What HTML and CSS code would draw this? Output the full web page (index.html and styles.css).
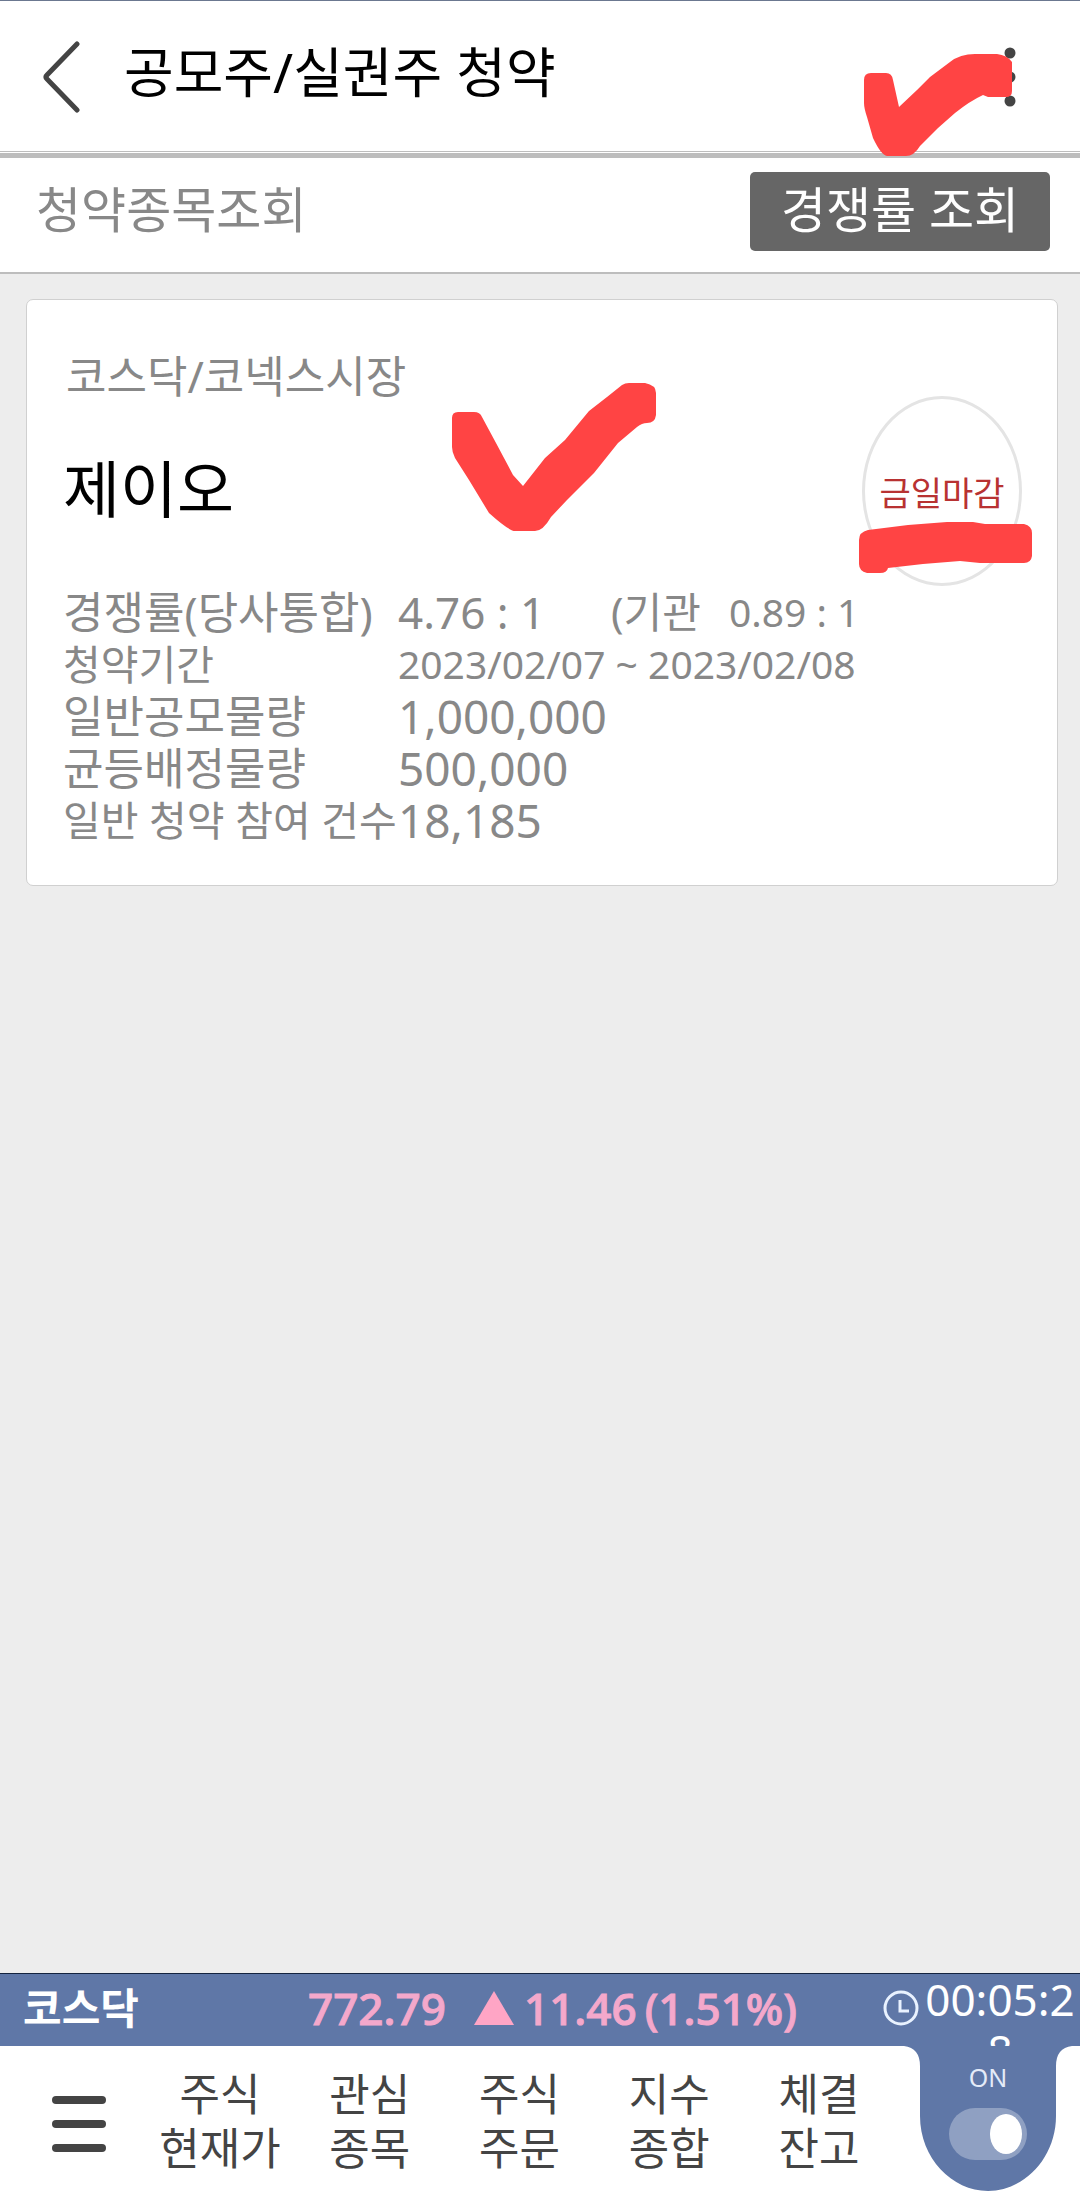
FILE: index.html
```html
<!DOCTYPE html>
<html lang="ko">
<head>
<meta charset="utf-8">
<meta name="viewport" content="width=device-width, initial-scale=1">
<title>공모주/실권주 청약</title>
<link rel="stylesheet" href="styles.css">
</head>
<body>
<div class="app">
  <header class="app-header">
    <button class="icon-button back" type="button" aria-label="뒤로">
      <svg width="40" height="74" viewBox="0 0 40 74"><path d="M37 4 7 35q-2 2 0 4L37 70" fill="none" stroke="#444" stroke-width="5" stroke-linecap="round" stroke-linejoin="round"/></svg>
    </button>
    <h1 class="title">공모주/실권주 청약</h1>
    <button class="icon-button more" type="button" aria-label="더보기">
      <svg width="12" height="60" viewBox="0 0 12 60" fill="#444"><circle cx="6" cy="6" r="5.5"/><circle cx="6" cy="30" r="5.5"/><circle cx="6" cy="54" r="5.5"/></svg>
    </button>
    <svg class="mark mark-header" width="152" height="104" viewBox="862 53 152 104"><path d="M864 80Q864 73 871 73H886Q892 73 893 80L899 107L917 90L930 77L950 62Q960 54 975 54H997Q1007 55 1012 62V91Q1012 97 1006 97H988L983 95Q970 101 955 113L938 128L920 146Q914 156 906 156H887Q881 155 873 138L867 117Q864 108 864 103Z"/></svg>
  </header>

  <section class="subbar">
    <h2 class="subbar-title">청약종목조회</h2>
    <button class="rate-button" type="button">경쟁률 조회</button>
  </section>

  <main class="content">
    <article class="card">
      <div class="card-top">
        <div class="stock">
          <p class="market">코스닥/코넥스시장</p>
          <h3 class="name">제이오</h3>
        </div>
        <div class="badge">금일마감</div>
      </div>
      <dl class="details">
        <dt>경쟁률(당사통합)</dt>
        <dd><span class="rate">4.76 : 1</span><span class="inst">(기관</span><span class="small">0.89 : 1</span></dd>
        <dt class="compact">청약기간</dt>
        <dd class="small">2023/02/07 ~ 2023/02/08</dd>
        <dt>일반공모물량</dt>
        <dd class="large">1,000,000</dd>
        <dt>균등배정물량</dt>
        <dd class="large">500,000</dd>
        <dt class="compact">일반 청약 참여 건수</dt>
        <dd class="large">18,185</dd>
      </dl>
      <svg class="mark mark-check" width="206" height="150" viewBox="451 382 206 150"><path d="M452 418Q452 412 458 412H474Q480 412 482 417L496 443L513 475L523 486L545 458L565 440L589 411L607 397L622 385Q625 383 629 383H645Q656 385 656 393V415Q655 423 647 423Q642 423 637 427L618 443L594 473L567 500L551 517Q543 531 535 531H515Q509 531 489 513L469 480L455 458Q452 452 452 447Z"/></svg>
      <svg class="mark mark-line" width="174" height="52" viewBox="859 522 174 52"><path d="M859 540Q859 532 868 530L908 525L947 522H973L985 524H1024Q1032 526 1032 533V556Q1031 563 1024 563H980L960 561L923 564L888 568Q887 573 880 573H867Q859 571 859 564Z"/></svg>
    </article>
  </main>

  <footer class="footer">
    <div class="ticker">
      <strong class="index-name">코스닥</strong>
      <span class="index-value">772.79</span>
      <svg class="up" width="40" height="34" viewBox="0 0 40 34"><path d="M20 0 40 34H0Z" fill="#ffa5c5"/></svg>
      <span class="index-change"><span>11.46</span><span>(1.51%)</span></span>
      <svg class="clock" width="36" height="36" viewBox="0 0 36 36" fill="none" stroke="#e9f2ff"><circle cx="18" cy="18" r="16" stroke-width="3"/><path d="M17 10V21H26" stroke-width="3"/></svg>
      <span class="timer">00:05:28</span>
    </div>
    <nav class="nav">
      <button class="icon-button menu" type="button" aria-label="전체 메뉴">
        <svg width="54" height="56" viewBox="0 0 54 56" fill="#444"><rect width="54" height="8" rx="4"/><rect y="24" width="54" height="8" rx="4"/><rect y="48" width="54" height="8" rx="4"/></svg>
      </button>
      <a href="#">주식<br>현재가</a>
      <a href="#">관심<br>종목</a>
      <a href="#">주식<br>주문</a>
      <a href="#">지수<br>종합</a>
      <a href="#">체결<br>잔고</a>
      <div class="pocket">
        <svg class="pocket-shape" width="168" height="146" viewBox="0 0 168 146"><path d="M0 0Q16 2 16 20V70C16 112 48 145 84 145S152 112 152 70V20Q152 2 168 0Z" fill="#5f77a7"/></svg>
        <label class="pocket-label" for="ticker-on">ON</label>
        <input class="toggle" id="ticker-on" type="checkbox" checked>
      </div>
    </nav>
  </footer>
</div>
</body>
</html>
```
FILE: styles.css
```css
* { box-sizing: border-box; }

body {
  margin: 0;
  font-family: "Noto Sans", "Noto Sans CJK KR", sans-serif;
  color: #888;
  background: #ededed;
}

h1, h2, h3, p, dl, dd { margin: 0; font-weight: 400; }

button { font: inherit; border: 0; cursor: pointer; }

svg { display: block; }

.app {
  display: flex;
  flex-direction: column;
  min-height: 100vh;
}

.icon-button { padding: 0; background: none; }

/* Header */
.app-header {
  position: relative;
  display: flex;
  align-items: center;
  height: 158px;
  padding: 0 64px 0 40px;
  border-top: 1px solid #6b7890;
  border-bottom: 5px solid #bdbdbd;
  background: #fff;
  box-shadow: inset 0 -1px #fff, inset 0 -2px #bdbdbd;
}

.title {
  flex: 1;
  margin-left: 44px;
  padding-bottom: 10px;
  font-size: 54px;
  line-height: 72px;
  color: #000;
}

.mark { position: absolute; fill: #ff4444; }
.mark-header { top: 52px; right: 66px; }

/* Section bar */
.subbar {
  display: flex;
  align-items: center;
  justify-content: space-between;
  height: 116px;
  padding: 0 30px 8px 36px;
  border-bottom: 2px solid #bdbdbd;
  background: #fff;
}

.subbar-title { padding-bottom: 4px; font-size: 49px; line-height: 64px; }

.rate-button {
  width: 300px;
  height: 79px;
  padding: 0 0 4px;
  border-radius: 5px;
  background: #666;
  color: #fff;
  font-size: 49px;
  line-height: 64px;
}

/* Offering card */
.content { flex: 1; padding: 25px 22px 25px 26px; }

.card {
  position: relative;
  padding: 50px 35px 39px 36px;
  border: 1px solid #d0d0d0;
  border-radius: 7px;
  background: #fff;
}

.card-top { display: flex; justify-content: space-between; }

.market { padding-left: 3px; font-size: 44px; line-height: 52px; }

.name {
  margin: 49px 0 59px;
  font-size: 62px;
  line-height: 76px;
  color: #000;
}

.badge {
  display: flex;
  align-items: center;
  justify-content: center;
  align-self: flex-end;
  width: 160px;
  height: 190px;
  border: 3px solid #e4e4e4;
  border-radius: 50%;
  color: #b83232;
  font-size: 34px;
}

.details {
  display: grid;
  grid-template-columns: 335px 1fr;
  font-size: 44px;
  line-height: 52px;
  white-space: nowrap;
}

.details dd { display: flex; }
.details .compact { font-size: 41px; }
.details .small { font-size: 39px; }
.details .large { font-size: 46px; }
.rate { width: 213px; }
.inst { width: 118px; font-size: 42px; }

.mark-check { top: 82px; left: 424px; }
.mark-line { top: 222px; right: 24px; }

/* Index ticker */
.ticker {
  display: flex;
  align-items: center;
  height: 73px;
  padding: 0 3px 4px 23px;
  border-top: 1px solid #14233f;
  background: #5f77a7;
  color: #f4a8cb;
  font-size: 44px;
  font-weight: 500;
  line-height: 50px;
  overflow: hidden;
}

.index-name {
  width: 285px;
  color: #fff;
  font-size: 42px;
  font-weight: 700;
}

.index-value { width: 166px; -webkit-text-stroke: 1px; }

.index-change {
  display: flex;
  flex: 1;
  gap: 8px;
  margin-left: 10px;
  -webkit-text-stroke: 1px;
}

.timer {
  align-self: flex-start;
  width: 154px;
  margin-left: 4px;
  color: #fff;
  font-weight: 400;
  line-height: 51px;
  text-align: center;
  word-break: break-all;
}

/* Bottom navigation */
.nav {
  display: flex;
  align-items: center;
  height: 155px;
  padding: 0 8px 0 52px;
  background: #fff;
}

.nav a {
  flex: 1;
  padding-bottom: 6px;
  color: #444;
  font-size: 44px;
  line-height: 54px;
  text-align: center;
  text-decoration: none;
  white-space: nowrap;
}

.menu { margin-right: 39px; }

.pocket {
  position: relative;
  display: flex;
  flex-direction: column;
  align-items: center;
  align-self: flex-start;
  width: 168px;
  height: 146px;
  margin-left: 10px;
  padding-top: 13px;
}

.pocket-shape { position: absolute; top: 0; left: 0; }

.pocket-label {
  position: relative;
  color: #e4ebf8;
  font-size: 25px;
  line-height: 36px;
}

.toggle {
  position: relative;
  appearance: none;
  width: 78px;
  height: 52px;
  margin: 13px 0 0;
  padding: 6px 5px;
  border-radius: 26px;
  background: #8fa0c2;
}

.toggle::before {
  content: "";
  display: block;
  width: 32px;
  height: 40px;
  border-radius: 50%;
  background: #fff;
}

.toggle:checked::before { margin-left: auto; }
```
